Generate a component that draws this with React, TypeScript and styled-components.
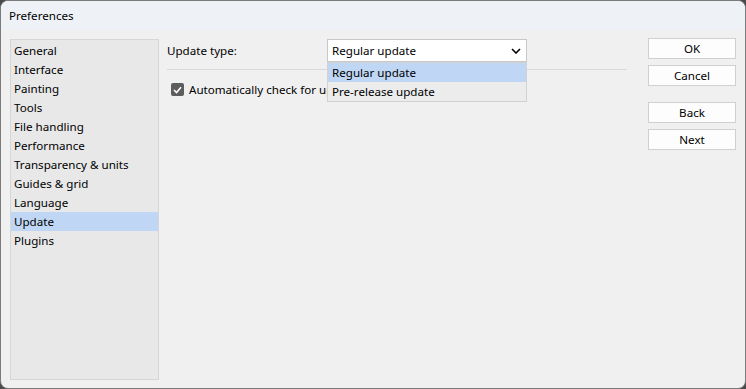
import styled, { createGlobalStyle } from 'styled-components';

const GlobalStyle = createGlobalStyle`
  html, body {
    margin: 0;
    padding: 0;
    background: #4a4a4a;
  }
  * {
    box-sizing: border-box;
  }
`

const Window = styled.div`
  width: 746px;
  height: 389px;
  border: 1px solid #7b7b7b;
  border-radius: 8px;
  overflow: hidden;
  background: #f0f0f0;
  display: flex;
  flex-direction: column;
  font-family: "Noto Sans", "Open Sans", sans-serif;
  font-size: 11.6px;
  color: #000;
`

const TitleBar = styled.div`
  height: 29px;
  background: #eef2f7;
  display: flex;
  align-items: center;
  padding-left: 8px;
  padding-bottom: 1px;
`

const Body = styled.div`
  flex: 1;
  display: flex;
  padding: 9px 9px 8px 9px;
`

const Sidebar = styled.div`
  width: 149px;
  height: 341px;
  background: #e8e8e8;
  border: 1px solid #d6d6d6;
  padding-top: 1px;
  display: flex;
  flex-direction: column;
`

const NavItem = styled.div<{ $active?: boolean }>`
  height: 19px;
  line-height: 19px;
  padding-left: 3px;
  white-space: nowrap;
  background: ${p => p.$active ? '#bfd7f5' : 'transparent'};
`

const Content = styled.div`
  flex: 1;
  margin-left: 8px;
  margin-right: 21px;
  position: relative;
  display: flex;
  flex-direction: column;
`

const FieldRow = styled.div`
  display: flex;
  align-items: center;
  height: 23px;
`

const FieldLabel = styled.span`
  width: 160px;
`

const SelectBox = styled.div`
  width: 200px;
  height: 23px;
  background: #fff;
  border: 1px solid #c8c8c8;
  display: flex;
  align-items: center;
  justify-content: space-between;
  padding: 0 5px 0 4px;
`

const Separator = styled.div`
  height: 1px;
  background: #d9d9d9;
  margin-top: 7px;
`

const CheckRow = styled.div`
  display: flex;
  align-items: center;
  height: 19px;
  width: 160px;
  overflow: hidden;
  margin-top: 10px;
  padding-left: 4px;
  white-space: nowrap;
`

const CheckBox = styled.span`
  flex: none;
  width: 13px;
  height: 13px;
  border-radius: 2px;
  background: #5d5d5d;
  display: inline-flex;
  align-items: center;
  justify-content: center;
  margin-right: 5px;
`

const Dropdown = styled.div`
  position: absolute;
  top: 23px;
  left: 160px;
  width: 200px;
  background: #f0f0f0;
  border: 1px solid #d2d2d2;
  z-index: 2;
`

const Option = styled.div<{ $active?: boolean }>`
  height: 19px;
  line-height: 19px;
  padding-left: 4px;
  background: ${p => p.$active ? '#bfd7f5' : '#ececec'};
`

const ButtonColumn = styled.div`
  width: 88px;
  margin-top: -1px;
  display: flex;
  flex-direction: column;
  gap: 6px;
`

const Spacer = styled.div`
  height: 4px;
`

const Button = styled.button`
  height: 21px;
  width: 88px;
  background: #fdfdfd;
  border: 1px solid #d0d0d0;
  border-radius: 0;
  font-family: inherit;
  font-size: 11.6px;
  color: #000;
  padding: 0;
`

const sections = [
  'General',
  'Interface',
  'Painting',
  'Tools',
  'File handling',
  'Performance',
  'Transparency & units',
  'Guides & grid',
  'Language',
  'Update',
  'Plugins',
]

export default function App() {
  return (
    <>
      <GlobalStyle />
      <Window>
        <TitleBar>Preferences</TitleBar>
        <Body>
          <Sidebar>
            {sections.map(s => (
              <NavItem key={s} $active={s === 'Update'}>{s}</NavItem>
            ))}
          </Sidebar>
          <Content>
            <FieldRow>
              <FieldLabel>Update type:</FieldLabel>
              <SelectBox>
                <span>Regular update</span>
                <svg width="10" height="6" viewBox="0 0 10 6">
                  <path d="M1 1 L5 5 L9 1" fill="none" stroke="#000" strokeWidth="1.6" />
                </svg>
              </SelectBox>
            </FieldRow>
            <Separator />
            <CheckRow>
              <CheckBox>
                <svg width="9" height="8" viewBox="0 0 9 8">
                  <path d="M1 4 L3.5 6.5 L8 1.2" fill="none" stroke="#fff" strokeWidth="1.6" />
                </svg>
              </CheckBox>
              Automatically check for updates
            </CheckRow>
            <Dropdown>
              <Option $active>Regular update</Option>
              <Option>Pre-release update</Option>
            </Dropdown>
          </Content>
          <ButtonColumn>
            <Button>OK</Button>
            <Button>Cancel</Button>
            <Spacer />
            <Button>Back</Button>
            <Button>Next</Button>
          </ButtonColumn>
        </Body>
      </Window>
    </>
  )
}
